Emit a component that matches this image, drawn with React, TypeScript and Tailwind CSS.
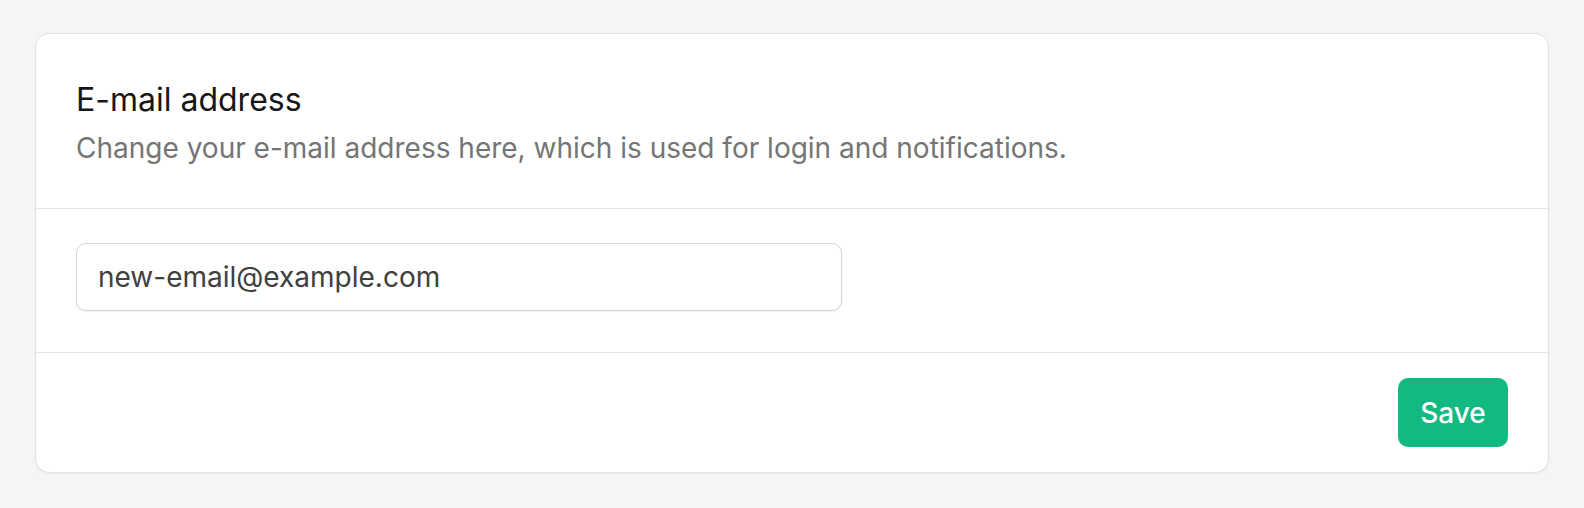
import React from "react";

export default function App() {
  return (
    <div
      className="min-h-[508px] w-full bg-[#f5f5f5] px-[35px] pt-[33px] pb-[38px]"
      style={{ fontFamily: "Inter, 'Noto Sans', sans-serif" }}
    >
      <div className="overflow-hidden rounded-[14px] border border-[#e3e3e3] bg-white shadow-[0_1px_3px_rgba(0,0,0,0.05)]">
        <div className="border-b border-[#e3e3e3] px-10 pt-[48px] pb-[42px]">
          <h2 className="text-[32px] leading-[36px] font-normal text-[#171717]">E-mail address</h2>
          <p className="mt-[12px] text-[28px] leading-[36px] text-[#757575]">
            Change your e-mail address here, which is used for login and notifications.
          </p>
        </div>
        <div className="border-b border-[#e3e3e3] px-10 pt-[34px] pb-[41px]">
          <div className="flex h-[68px] w-[766px] items-center rounded-[10px] border border-[#d4d4d4] bg-white px-[21px] shadow-[0_1px_2px_rgba(0,0,0,0.07)]">
            <span className="text-[28px] text-[#404040]">new-email@example.com</span>
          </div>
        </div>
        <div className="flex justify-end px-10 pt-[25px] pb-[25px]">
          <button className="flex h-[69px] w-[110px] items-center justify-center rounded-[10px] bg-[#12b981] text-[28px] font-medium text-white">
            Save
          </button>
        </div>
      </div>
    </div>
  );
}
